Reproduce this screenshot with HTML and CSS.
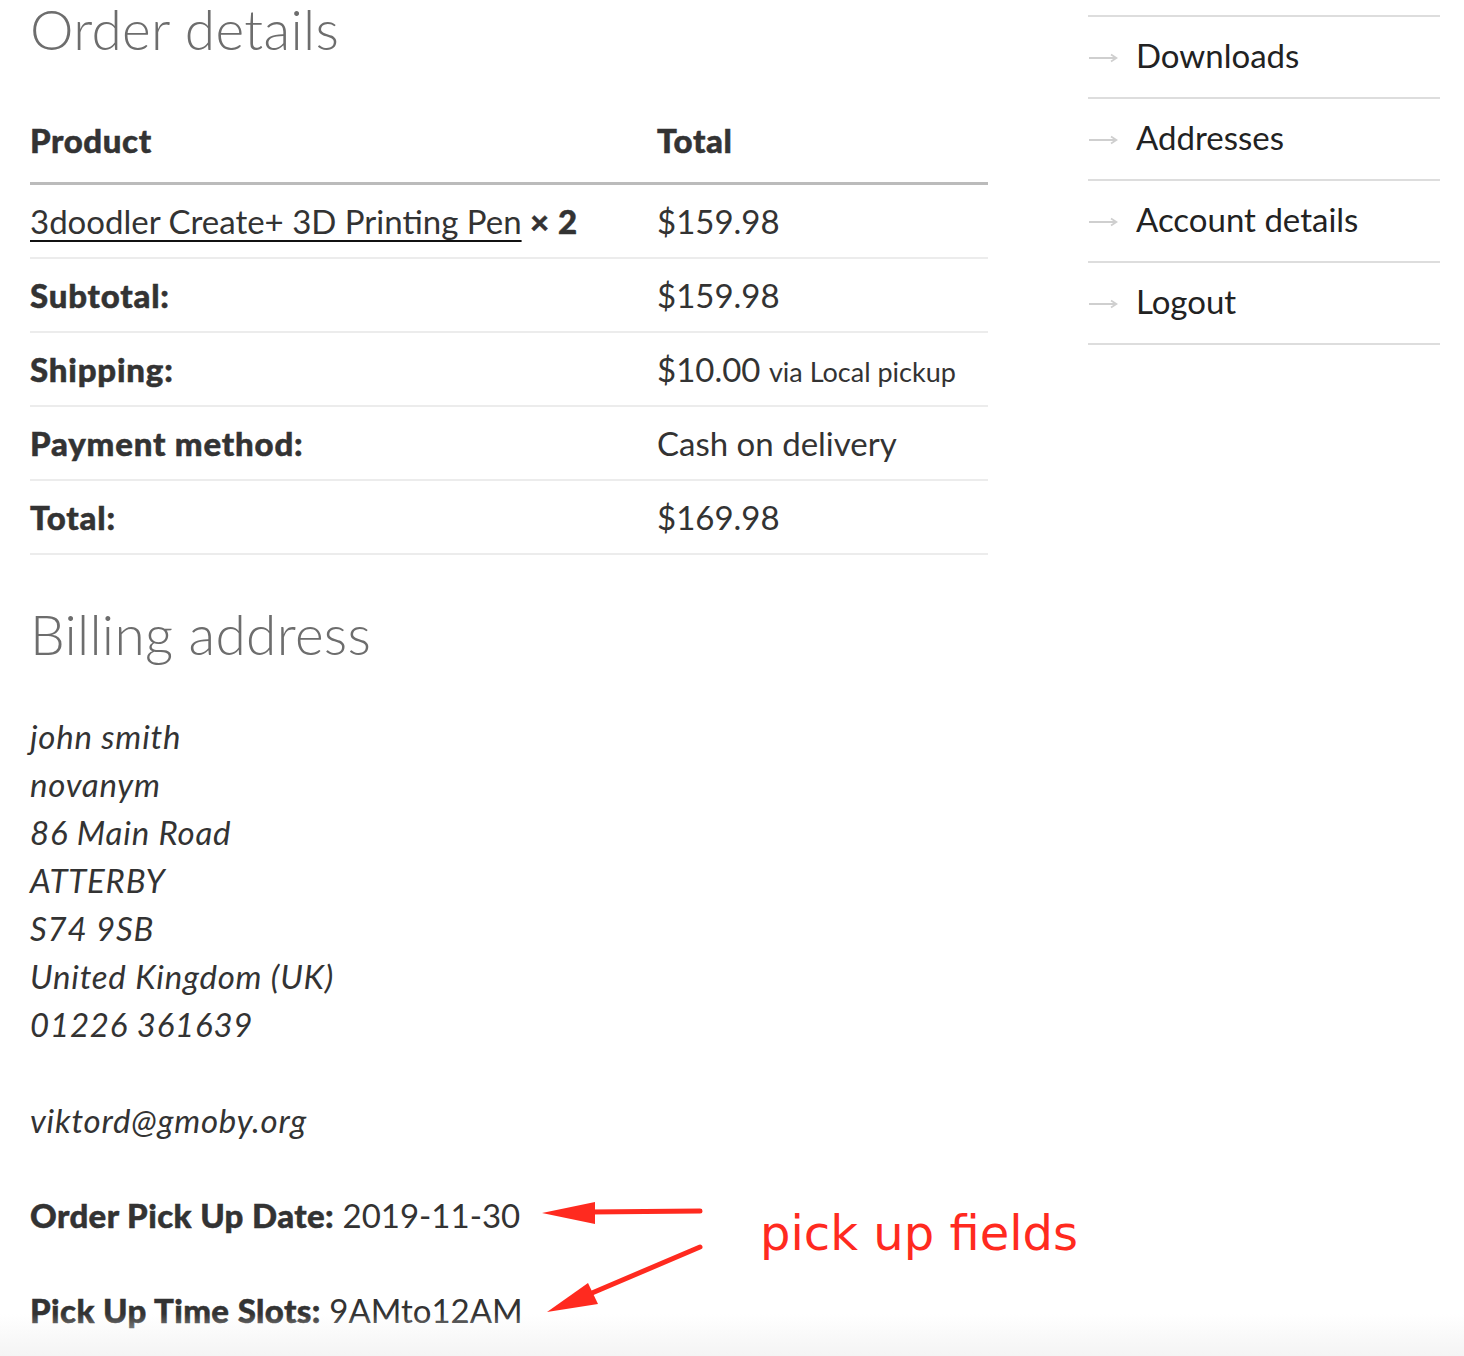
FILE: index.html
```html
<!DOCTYPE html>
<html lang="en">
<head>
<meta charset="utf-8">
<title>Order details</title>
<link rel="stylesheet" href="styles.css">
</head>
<body>
<div class="page">
  <main class="main">
    <h2 class="title">Order details</h2>
    <table class="order-table">
      <thead>
        <tr><th class="col-product">Product</th><th>Total</th></tr>
      </thead>
      <tbody>
        <tr><td class="col-product"><a href="#" class="product-link">3doodler Create+ 3D Printing Pen</a> <strong class="qty">× 2</strong></td><td>$159.98</td></tr>
        <tr><th class="col-product">Subtotal:</th><td>$159.98</td></tr>
        <tr><th class="col-product">Shipping:</th><td>$10.00 <small class="via">via Local pickup</small></td></tr>
        <tr><th class="col-product">Payment method:</th><td>Cash on delivery</td></tr>
        <tr><th class="col-product">Total:</th><td>$169.98</td></tr>
      </tbody>
    </table>

    <h2 class="title billing-title">Billing address</h2>
    <address class="address">john smith<br>novanym<br>86 Main Road<br>ATTERBY<br>S74 9SB<br>United Kingdom (UK)<br>01226 361639<br><br>viktord@gmoby.org</address>

    <p class="field"><strong>Order Pick Up Date:</strong> 2019-11-30</p>
    <p class="field"><strong>Pick Up Time Slots:</strong> 9AMto12AM</p>
  </main>

  <nav class="sidebar">
    <ul class="nav-list">
      <li class="nav-item"><svg class="nav-arrow" width="30" height="12" viewBox="0 0 30 12"><path d="M1 6H28M23 2.5L28.5 6L23 9.5" fill="none" stroke="#cfcfcf" stroke-width="1.8"/></svg><a href="#">Downloads</a></li>
      <li class="nav-item"><svg class="nav-arrow" width="30" height="12" viewBox="0 0 30 12"><path d="M1 6H28M23 2.5L28.5 6L23 9.5" fill="none" stroke="#cfcfcf" stroke-width="1.8"/></svg><a href="#">Addresses</a></li>
      <li class="nav-item"><svg class="nav-arrow" width="30" height="12" viewBox="0 0 30 12"><path d="M1 6H28M23 2.5L28.5 6L23 9.5" fill="none" stroke="#cfcfcf" stroke-width="1.8"/></svg><a href="#">Account details</a></li>
      <li class="nav-item"><svg class="nav-arrow" width="30" height="12" viewBox="0 0 30 12"><path d="M1 6H28M23 2.5L28.5 6L23 9.5" fill="none" stroke="#cfcfcf" stroke-width="1.8"/></svg><a href="#">Logout</a></li>
    </ul>
  </nav>
</div>

<div class="annotation">
  <svg class="annotation-arrows" width="200" height="140" viewBox="530 1190 200 140">
    <line x1="700" y1="1211" x2="590" y2="1212" stroke="#ff2a1f" stroke-width="5" stroke-linecap="round"/>
    <polygon points="542,1213 595,1202 595,1224" fill="#ff2a1f"/>
    <line x1="700" y1="1247" x2="592" y2="1293" stroke="#ff2a1f" stroke-width="5" stroke-linecap="round"/>
    <polygon points="547,1312 588,1283 598,1304" fill="#ff2a1f"/>
  </svg>
  <span class="annotation-text">pick up fields</span>
</div>

<div class="bottom-fade"></div>
</body>
</html>
```
FILE: styles.css
```css
html, body {
  margin: 0;
  padding: 0;
  background: #fff;
}

body {
  font-family: Lato, "Liberation Sans", sans-serif;
  color: #333;
  font-size: 33px;
  height: 1356px;
  overflow: hidden;
  position: relative;
}

.page {
  display: flex;
  padding-left: 30px;
}

.main {
  width: 958px;
  flex: none;
}

.title {
  margin: 0;
  padding-top: 2px;
  font-size: 55px;
  line-height: 54px;
  font-weight: 300;
  color: #6d6d6d;
  letter-spacing: 0.3px;
}

.order-table {
  width: 958px;
  border-collapse: collapse;
  margin-top: 48px;
}

.order-table th,
.order-table td {
  text-align: left;
  padding: 16px 0;
  height: 40px;
  line-height: 40px;
  vertical-align: middle;
  box-sizing: content-box;
}

.order-table thead th {
  padding: 16px 0 22px;
  border-bottom: 3px solid #bbbbbb;
  font-weight: 900;
  -webkit-text-stroke: 0.5px #333;
  letter-spacing: 0.6px;
}

.order-table tbody tr {
  border-bottom: 2px solid #ececec;
}

.order-table tbody th {
  font-weight: 900;
  -webkit-text-stroke: 0.5px #333;
  letter-spacing: 0.8px;
}

.col-product {
  width: 627px;
}

.product-link {
  color: #333;
  text-decoration: underline;
  text-decoration-thickness: 2px;
  text-underline-offset: 6px;
  text-decoration-color: #111;
}

.qty {
  font-weight: 900;
  -webkit-text-stroke: 0.5px #333;
  letter-spacing: 0.5px;
}

.via {
  font-size: 27px;
  line-height: 1;
}

.billing-title {
  margin-top: 50px;
}

.address {
  margin-top: 51px;
  font-style: italic;
  line-height: 48px;
  letter-spacing: 0.8px;
}

.field {
  margin: 47px 0 0;
  line-height: 48px;
}

.field strong {
  font-weight: 900;
  -webkit-text-stroke: 0.5px #333;
  letter-spacing: 0.4px;
}

.sidebar {
  width: 352px;
  margin-left: 100px;
  flex: none;
}

.nav-list {
  list-style: none;
  margin: 15px 0 0;
  padding: 0;
  border-top: 2px solid #dddddd;
}

.nav-item {
  display: flex;
  align-items: center;
  height: 76px;
  padding-bottom: 4px;
  border-bottom: 2px solid #dddddd;
}

.nav-arrow {
  flex: none;
  margin-right: 18px;
  margin-top: 6px;
}

.nav-item a {
  color: #222;
  text-decoration: none;
}

.annotation {
  position: absolute;
  left: 530px;
  top: 1190px;
  width: 600px;
  height: 140px;
}

.annotation-arrows {
  position: absolute;
  left: 0;
  top: 0;
}

.annotation-text {
  position: absolute;
  left: 230px;
  top: 13px;
  font-family: "DejaVu Sans", Verdana, sans-serif;
  font-size: 48px;
  line-height: 60px;
  color: #ff2a1f;
  white-space: nowrap;
}

.bottom-fade {
  position: absolute;
  left: 0;
  right: 0;
  bottom: 0;
  height: 42px;
  background: linear-gradient(to bottom, rgba(244, 244, 244, 0), #f4f4f4);
  pointer-events: none;
}
```
